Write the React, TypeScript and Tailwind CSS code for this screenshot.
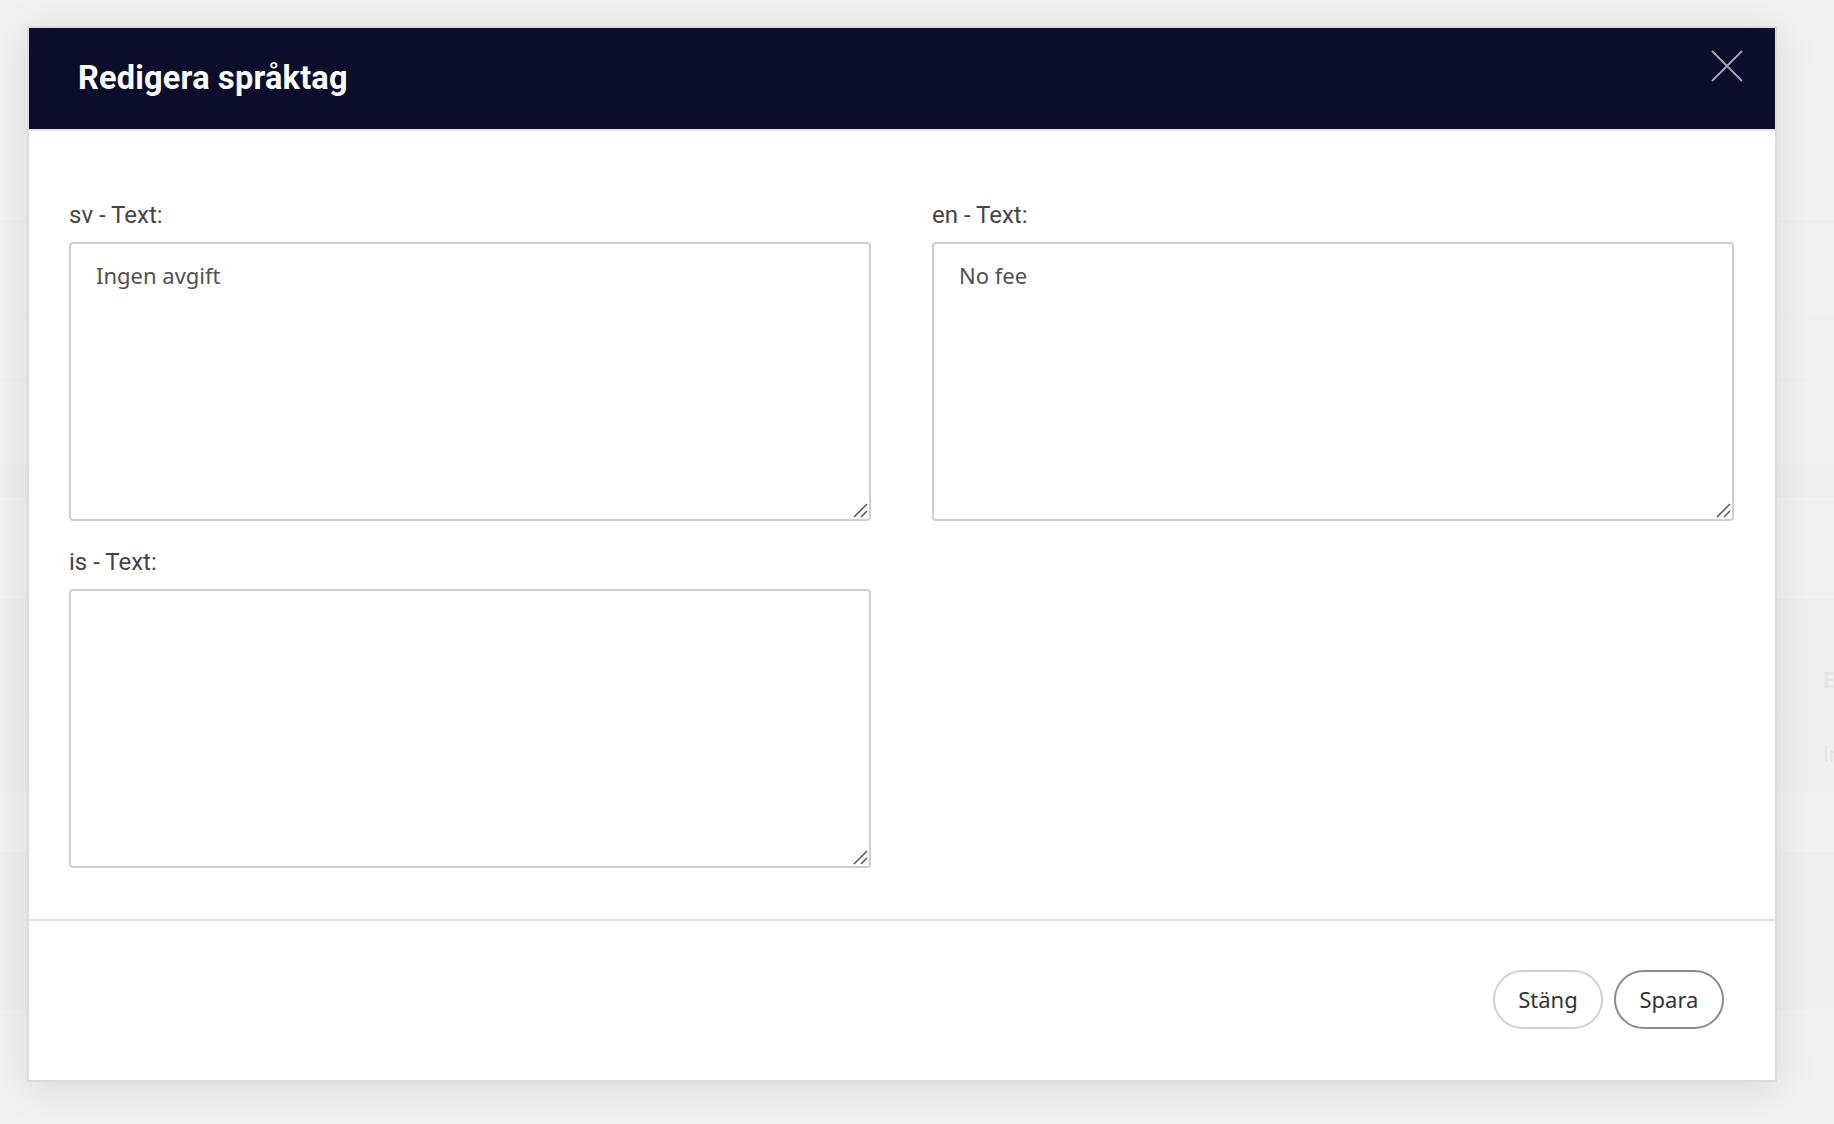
import React from "react";

const rows = [
  { h: "h-[222px]", shade: false },
  { h: "h-[97px]", shade: false },
  { h: "h-[62px]", shade: false },
  { h: "h-[84px]", shade: false },
  { h: "h-[32px]", shade: true },
  { h: "h-[103px]", shade: false },
  { h: "h-[118px]", shade: true },
  { h: "h-[74px]", shade: true },
  { h: "h-[62px]", shade: false },
  { h: "h-[156px]", shade: true },
];

function Backdrop() {
  return (
    <div className="flex flex-col w-full">
      {rows.map((r, i) => (
        <div
          key={i}
          className={`${r.h} w-full border-b border-[#e6e6e6] ${r.shade ? "bg-[#ebebeb]" : "bg-[#f0f0f0]"} flex justify-end`}
        >
          {i === 6 && (
            <div className="w-[28px] border-l border-[#e4e4e4] flex flex-col justify-end pb-[20px]">
              <span className="pl-[16px] text-[22px] font-bold text-[#d0d0d0]" style={{ fontFamily: "Roboto, sans-serif" }}>E</span>
            </div>
          )}
          {i === 7 && (
            <div className="w-[28px] border-l border-[#e4e4e4] flex items-center">
              <span className="pl-[16px] text-[22px] text-[#d0d0d0]" style={{ fontFamily: "Roboto, sans-serif" }}>In</span>
            </div>
          )}
        </div>
      ))}
    </div>
  );
}

function Field({ label, value }: { label: string; value?: string }) {
  return (
    <div className="flex flex-col">
      <label className="text-[24px] leading-[28px] text-[#444] mb-[13px] font-['Roboto',sans-serif]">
        {label}
      </label>
      <div className="relative">
        <textarea
          defaultValue={value}
          className="block h-[279px] w-full resize-none rounded-[4px] border-2 border-[#cfcfcf] bg-white px-[25px] pt-[16px] pb-[14px] text-[22px] leading-[30px] text-[#505050] outline-none font-['Noto_Sans',sans-serif]"
        />
        <svg className="absolute right-[3px] bottom-[3px]" width="15" height="15" viewBox="0 0 15 15">
          <path d="M1 14 L14 1 M8 14 L14 8" stroke="#4a4a4a" strokeWidth="1.4" fill="none" />
        </svg>
      </div>
    </div>
  );
}

export default function App() {
  return (
    <div className="relative w-[1834px] h-[1124px] overflow-hidden bg-[#efefef]">
      <Backdrop />
      <div className="absolute inset-0 bg-[#f2f2f2]/60 pl-[27px] pt-[26px]">
        <div className="w-[1750px] border-2 border-[#dcdcdc] bg-white shadow-[0_6px_40px_rgba(0,0,0,0.10)]">
          <div className="h-[103px] bg-[#0b0d2b] border-b-2 border-[#e6e6e6] flex justify-between pl-[49px] pr-[31px]">
            <h1 className="self-center text-[32.5px] font-bold text-white font-['Roboto',sans-serif] tracking-[0.2px]">
              Redigera språktag
            </h1>
            <button className="mt-[21px] self-start w-[34px] h-[34px] flex items-center justify-center">
              <svg width="34" height="34" viewBox="0 0 34 34">
                <path d="M2 2 L32 32 M32 2 L2 32" stroke="#a2a2ae" strokeWidth="2" fill="none" />
              </svg>
            </button>
          </div>
          <div className="grid grid-cols-2 gap-x-[61px] gap-y-[27px] pl-[40px] pr-[41px] pt-[70px] pb-[51px]">
            <Field label="sv - Text:" value="Ingen avgift" />
            <Field label="en - Text:" value="No fee" />
            <Field label="is - Text:" />
          </div>
          <div className="h-[161px] border-t-2 border-[#e2e2e2] flex items-center justify-end gap-[11px] pr-[51px] pb-[2px]">
            <button className="h-[59px] w-[110px] rounded-full border-2 border-[#d0d0d0] text-[22px] text-[#333] font-['Noto_Sans',sans-serif]">
              Stäng
            </button>
            <button className="h-[59px] w-[110px] rounded-full border-2 border-[#8a8a8a] text-[22px] text-[#333] font-['Noto_Sans',sans-serif]">
              Spara
            </button>
          </div>
        </div>
      </div>
    </div>
  );
}
